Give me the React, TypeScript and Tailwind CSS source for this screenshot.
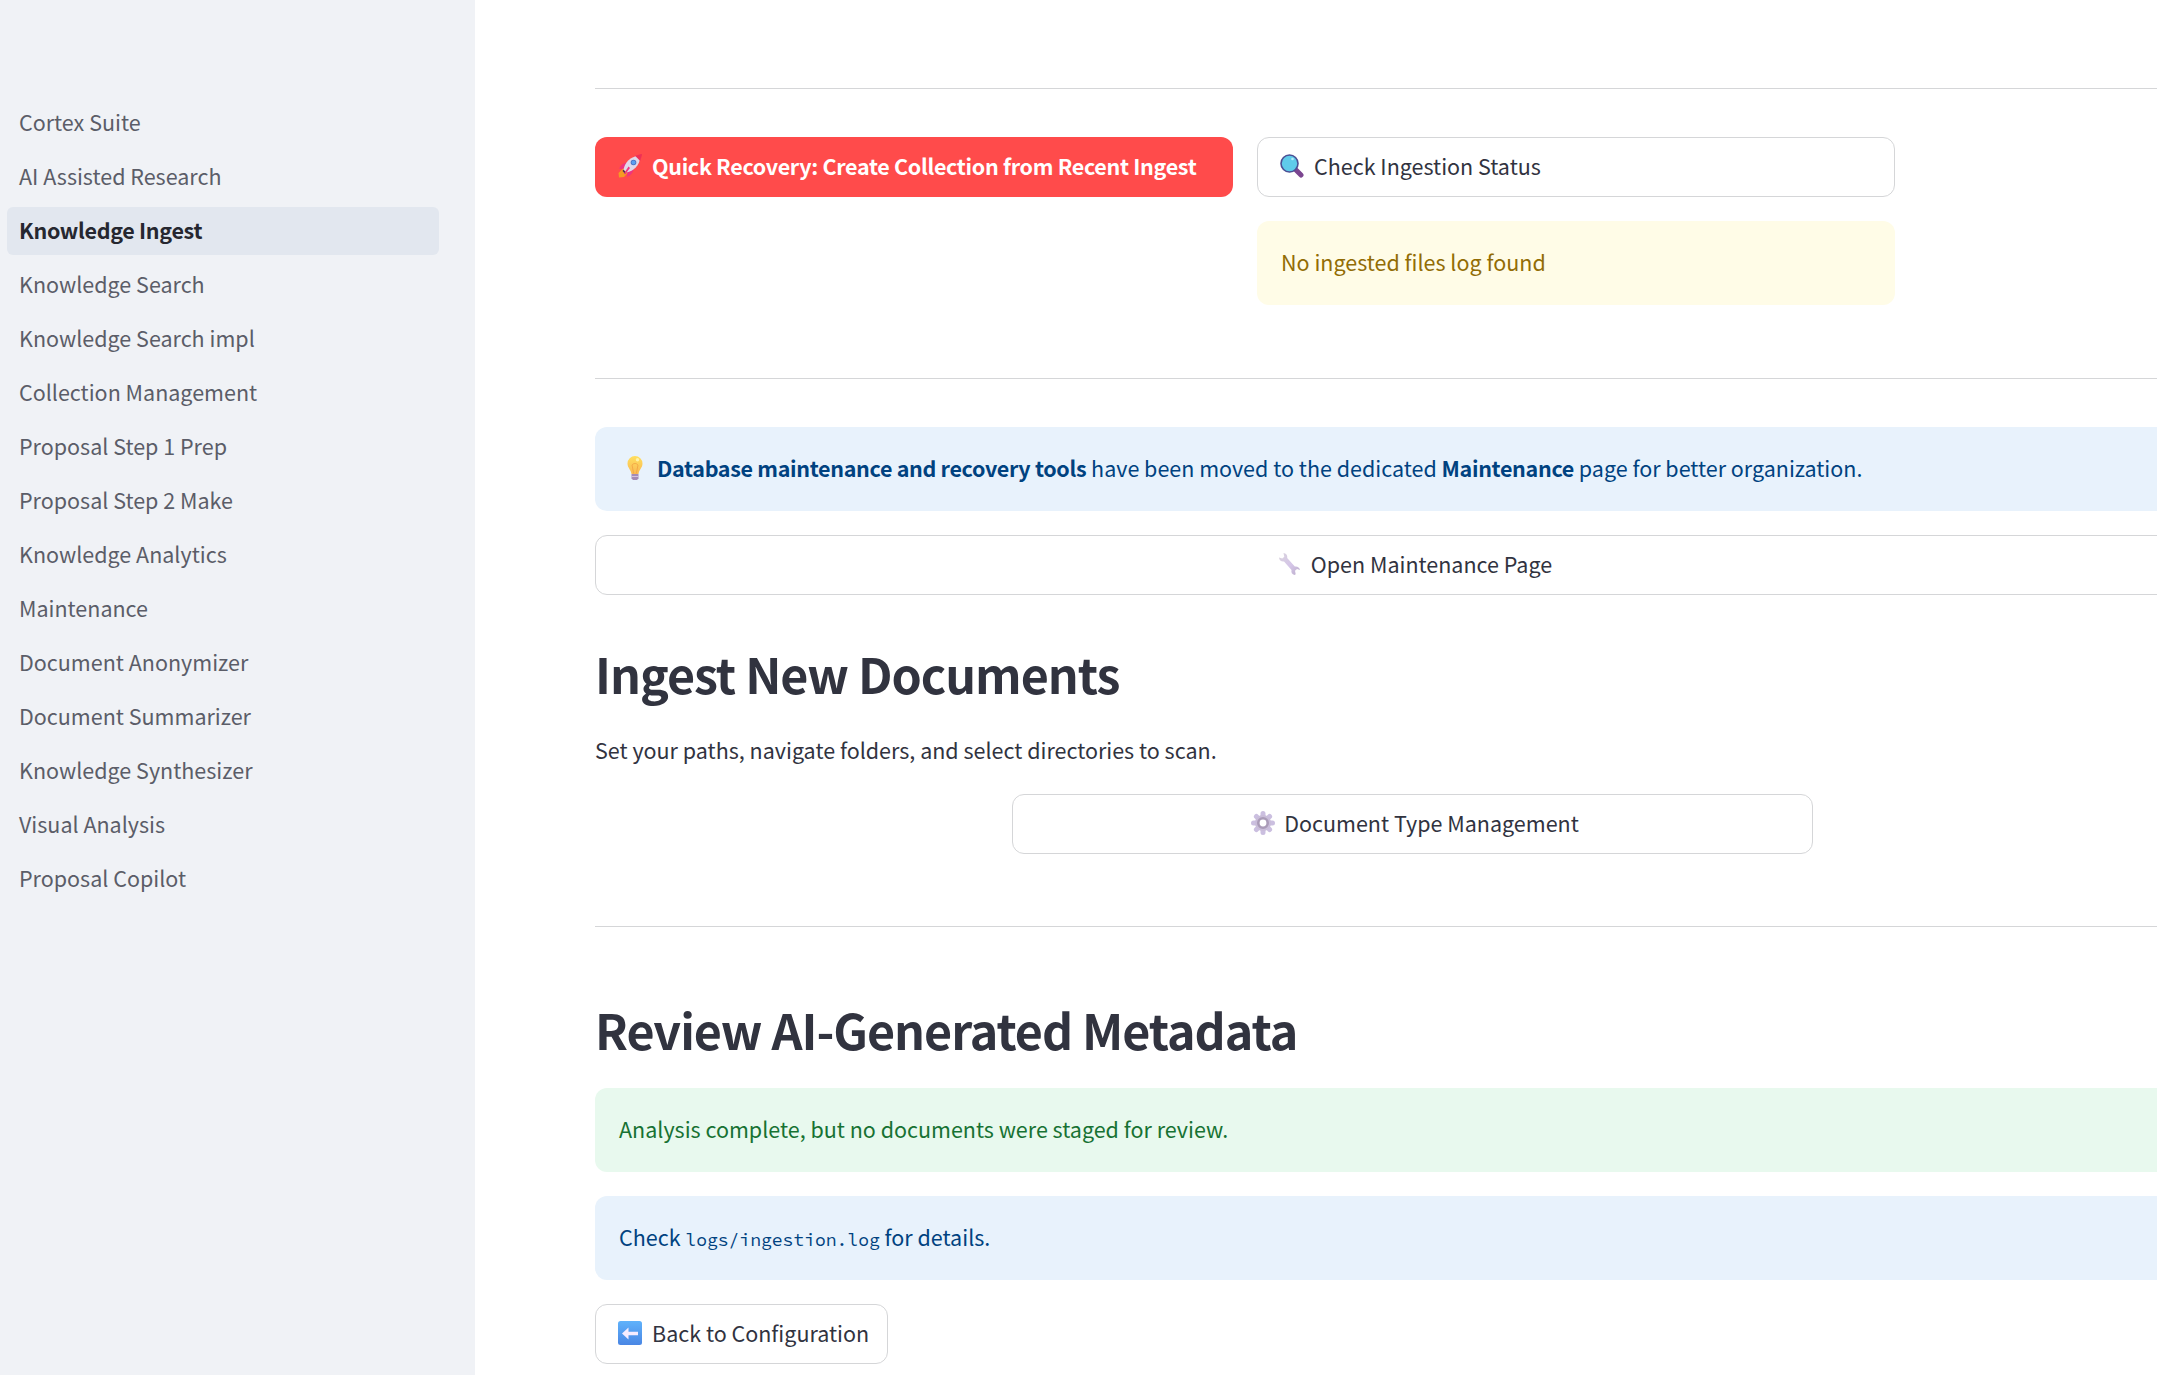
import React from "react";

const navItems = [
  "Cortex Suite",
  "AI Assisted Research",
  "Knowledge Ingest",
  "Knowledge Search",
  "Knowledge Search impl",
  "Collection Management",
  "Proposal Step 1 Prep",
  "Proposal Step 2 Make",
  "Knowledge Analytics",
  "Maintenance",
  "Document Anonymizer",
  "Document Summarizer",
  "Knowledge Synthesizer",
  "Visual Analysis",
  "Proposal Copilot",
];

const iconClass = "h-6 w-6 shrink-0";

function RocketIcon() {
  return (
    <svg viewBox="0 0 24 24" className={iconClass}>
      <path d="M9.500 8.500C6 8.500 3 10.500 1 14.500l6.500 1z" fill="#f0347d" />
      <path d="M15.500 14.500c0 3.500-2 6.500-6 8.500l-1-6.500z" fill="#f0347d" />
      <path d="M5 14.500 9.500 19 6 23 1 23.500.5 19z" fill="#f59b23" />
      <path d="M5.500 15.500 8.500 18.500 7 19.700 4.500 17z" fill="#4a3350" />
      <path d="M5.500 15.500C7 8.500 12 2.500 21.500 1.500c.5 0 1 .5 1 1C21.500 12 15.500 17 8.500 18.500z" fill="#e0d8ea" />
      <path d="M17 1.800 23.300 0c.5 0 .7.300.7.700L22.200 7z" fill="#ef2f55" />
      <circle cx="15.500" cy="8.500" r="2.800" fill="#4a70c0" />
      <circle cx="15.500" cy="8.500" r="2" fill="#5b9ff0" />
      <path d="m10.500 12.500 1.500 1.500-5 6.500-1-1z" fill="#f0347d" />
    </svg>
  );
}

function SearchIcon() {
  return (
    <svg viewBox="0 0 24 24" className={iconClass}>
      <path d="m16 16 5 5" stroke="#7b4590" strokeWidth="5" strokeLinecap="round" />
      <circle cx="9.500" cy="9.500" r="8.500" fill="#5fcbea" stroke="#4b4f94" strokeWidth="1.600" />
      <circle cx="12.500" cy="5" r="1.300" fill="#b5ecf8" />
    </svg>
  );
}

function BulbIcon() {
  return (
    <svg viewBox="0 0 24 24" className={iconClass}>
      <defs>
        <linearGradient id="bulb" x1="0" y1="0" x2="0" y2="1">
          <stop offset="0" stopColor="#ffdf5e" />
          <stop offset="1" stopColor="#f9b954" />
        </linearGradient>
      </defs>
      <path d="M12 0a7.500 7.500 0 0 0-7.500 7.500c0 4.500 3.500 6 4 10.500h7c.5-4.500 4-6 4-10.500A7.500 7.500 0 0 0 12 0z" fill="url(#bulb)" />
      <path d="M10.700 17.500 9 9c1.500-2 4.500-2 6 0l-1.700 8.500" fill="none" stroke="#f3a544" strokeWidth="0.900" />
      <circle cx="14.500" cy="3.800" r="1.700" fill="#fff3a8" />
      <path d="M8.500 18h7v4.500L14 24h-4l-1.500-1.500z" fill="#a58bb5" />
      <path d="M8.500 20.500h7" stroke="#d3c3de" strokeWidth="1" />
    </svg>
  );
}

function WrenchIcon() {
  return (
    <svg viewBox="0 0 24 24" className={iconClass}>
      <defs>
        <linearGradient id="wrench" x1="0" y1="0" x2="1" y2="1">
          <stop offset="0" stopColor="#d9d3dd" />
          <stop offset="0.550" stopColor="#d5c6e8" />
          <stop offset="1" stopColor="#bcaecb" />
        </linearGradient>
      </defs>
      <path
        d="M5.500 1c2.400.2 4.300 2.400 3.700 5l7.600 8.500c2.500-.5 4.800 1 5.200 3.500l-3-1-2 1.800.7 3.500-1.200.7c-2.500-.5-3.600-2.700-3-5L6 9.500C3.500 10 1.200 8.200 1 5.500l3.300 1 2-1.700z"
        fill="url(#wrench)"
      />
    </svg>
  );
}

function GearIcon() {
  return (
    <svg viewBox="0 0 24 24" className={iconClass}>
      <g stroke="#cbbfe0" strokeWidth="5" strokeLinecap="round">
        <path d="M12 2.500v19M2.500 12h19" />
        <path d="m5.400 5.400 13.200 13.200M18.600 5.400 5.400 18.600" />
      </g>
      <circle cx="12" cy="12" r="8" fill="#c9bdd9" />
      <circle cx="12" cy="12" r="4.700" fill="#fff" stroke="#aa9bb8" strokeWidth="2.600" />
    </svg>
  );
}

function BackIcon() {
  return (
    <svg viewBox="0 0 24 24" className={iconClass}>
      <defs>
        <linearGradient id="back" x1="0" y1="0" x2="0" y2="1">
          <stop offset="0" stopColor="#5fb2fb" />
          <stop offset="1" stopColor="#4a86e4" />
        </linearGradient>
      </defs>
      <rect width="24" height="24" rx="2.500" fill="url(#back)" />
      <path d="M4 12.500 10.500 6.500v4.300H20v3.400h-9.500v4.300z" fill="#f6ecff" />
    </svg>
  );
}

function ActionButton({
  icon,
  label,
  className,
}: {
  icon: React.ReactNode;
  label: string;
  className: string;
}) {
  return (
    <button className={`flex h-[60px] items-center rounded-xl pb-0.5 ${className}`}>
      {icon}
      <span className="whitespace-nowrap">{label}</span>
    </button>
  );
}

export default function App() {
  return (
    <div className="flex h-[1375px] w-full overflow-hidden bg-white font-['Source_Sans_Pro','Noto_Sans_CJK_SC',sans-serif] text-[21.500px] leading-[36px] text-[#31333f]">
      <aside className="w-[475px] shrink-0 bg-[#f0f2f6] pt-[99px] pr-9 pl-[7px]">
        <nav className="flex flex-col gap-1.5">
          {navItems.map((item) => (
            <a
              key={item}
              className={
                item === "Knowledge Ingest"
                  ? "flex h-12 items-center rounded-md bg-[#e2e7ef] px-3 pb-0.5 font-semibold tracking-[-0.320px] text-[#262730]"
                  : "flex h-12 items-center rounded-md px-3 pb-0.5 text-[#5b5d68]"
              }
            >
              {item}
            </a>
          ))}
        </nav>
      </aside>

      <main className="ml-[120px] w-[1643px] shrink-0 pt-[88px]">
        <hr className="border-[#d5d6d8]" />
        <section className="mt-12 flex gap-6">
          <ActionButton
            icon={<RocketIcon />}
            label="Quick Recovery: Create Collection from Recent Ingest"
            className="w-[638px] gap-2.5 bg-[#ff4b4b] px-[23px] font-semibold tracking-[-0.310px] text-white"
          />
          <div className="flex w-[638px] flex-col gap-6">
            <ActionButton
              icon={<SearchIcon />}
              label="Check Ingestion Status"
              className="gap-2.5 border border-[#d5d6d8] px-[22px]"
            />
            <div className="rounded-xl bg-[#fffce7] px-6 pt-[23px] pb-[25px] text-[#926c05]">
              No ingested files log found
            </div>
          </div>
        </section>

        <hr className="mt-[73px] border-[#d5d6d8]" />
        <div className="mt-12 flex items-center gap-2.5 rounded-xl bg-[#e8f2fc] pt-[23px] pr-6 pb-[25px] pl-7 text-[#004280]">
          <BulbIcon />
          <p>
            <strong className="font-semibold tracking-[-0.320px]">Database maintenance and recovery tools</strong> have
            been moved to the dedicated <strong className="font-semibold tracking-[-0.320px]">Maintenance</strong> page
            for better organization.
          </p>
        </div>
        <ActionButton
          icon={<WrenchIcon />}
          label="Open Maintenance Page"
          className="mt-6 w-full justify-center gap-[9px] border border-[#d5d6d8] pr-[3px]"
        />

        <h2 className="mt-[46px] text-[48.400px] leading-[65px] font-semibold tracking-[-1.020px]">
          Ingest New Documents
        </h2>
        <p className="mt-[26px]">Set your paths, navigate folders, and select directories to scan.</p>
        <ActionButton
          icon={<GearIcon />}
          label="Document Type Management"
          className="mt-[26px] ml-[417px] w-[801px] justify-center gap-[9px] border border-[#d5d6d8] pl-[5px]"
        />

        <hr className="mt-[72px] border-[#d5d6d8]" />
        <h2 className="mt-[70px] text-[48.400px] leading-[65px] font-semibold tracking-[-1.020px]">
          Review AI-Generated Metadata
        </h2>
        <div className="mt-[26px] rounded-xl bg-[#e8f9ee] px-6 pt-[23px] pb-[25px] text-[#177233]">
          Analysis complete, but no documents were staged for review.
        </div>
        <div className="mt-6 h-[84px] rounded-xl bg-[#e8f2fc] px-6 pt-[23px] text-[#004280]">
          Check{" "}
          <code className="font-['Source_Code_Pro','Noto_Sans_Mono_CJK_SC','Liberation_Mono',monospace] text-[18px] leading-none">
            logs/ingestion.log
          </code>{" "}
          for details.
        </div>
        <ActionButton
          icon={<BackIcon />}
          label="Back to Configuration"
          className="mt-6 w-[293px] gap-2.5 border border-[#d5d6d8] px-[22px]"
        />
      </main>
    </div>
  );
}
